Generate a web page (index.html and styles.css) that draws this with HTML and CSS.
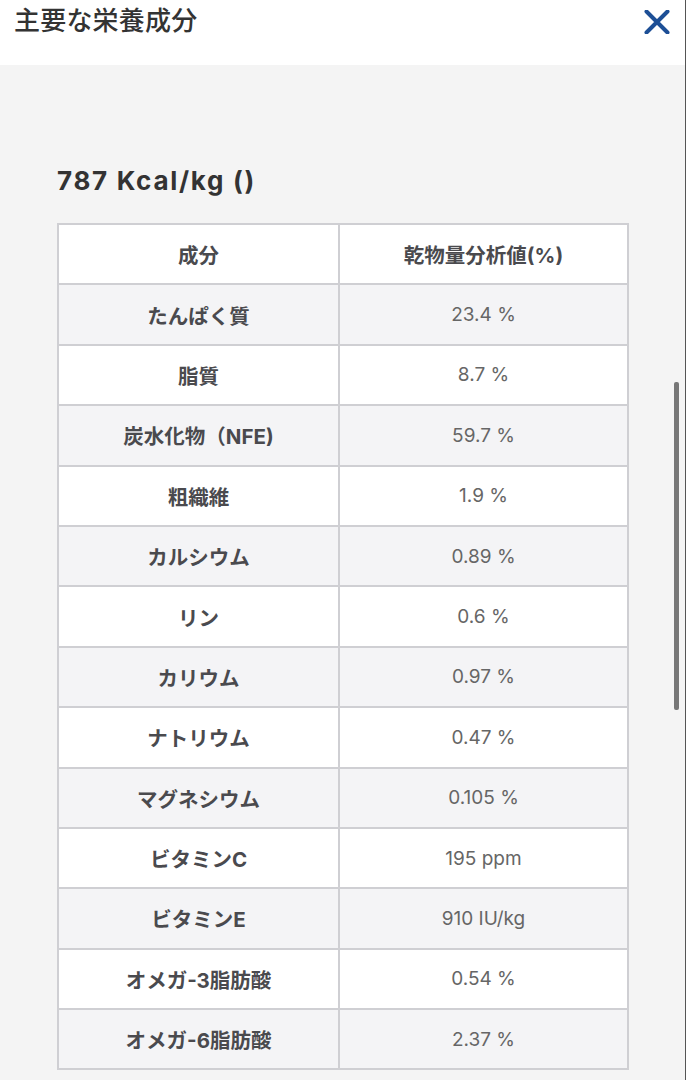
FILE: index.html
```html
<!DOCTYPE html>
<html lang="ja">
<head>
<meta charset="utf-8">
<title>主要な栄養成分</title>
<link rel="stylesheet" href="styles.css">
</head>
<body>
<div class="page">
  <header class="top">
    <h1 class="title">主要な栄養成分</h1>
    <button class="close" aria-label="閉じる">
      <svg width="26" height="24" viewBox="0 0 26 24"><path d="M2.5 1.5 L23.5 22.5 M23.5 1.5 L2.5 22.5" stroke="#1d4f96" stroke-width="4" stroke-linecap="round" fill="none"/></svg>
    </button>
  </header>
  <main class="content">
    <h2 class="kcal">787 Kcal/kg ()</h2>
    <table class="nutri">
      <colgroup><col class="c1"><col class="c2"></colgroup>
      <thead>
        <tr><th>成分</th><th>乾物量分析値(%)</th></tr>
      </thead>
      <tbody>
        <tr><th>たんぱく質</th><td>23.4 %</td></tr>
        <tr><th>脂質</th><td>8.7 %</td></tr>
        <tr><th>炭水化物（NFE)</th><td>59.7 %</td></tr>
        <tr><th>粗織維</th><td>1.9 %</td></tr>
        <tr><th>カルシウム</th><td>0.89 %</td></tr>
        <tr><th>リン</th><td>0.6 %</td></tr>
        <tr><th>カリウム</th><td>0.97 %</td></tr>
        <tr><th>ナトリウム</th><td>0.47 %</td></tr>
        <tr><th>マグネシウム</th><td>0.105 %</td></tr>
        <tr><th>ビタミンC</th><td>195 ppm</td></tr>
        <tr><th>ビタミンE</th><td>910 IU/kg</td></tr>
        <tr><th>オメガ-3脂肪酸</th><td>0.54 %</td></tr>
        <tr><th>オメガ-6脂肪酸</th><td>2.37 %</td></tr>
      </tbody>
    </table>
  </main>
  <div class="thumb"></div>
</div>
</body>
</html>
```
FILE: styles.css
```css
* { box-sizing: border-box; }
html, body { margin: 0; padding: 0; }
body {
  font-family: Inter, "Noto Sans CJK JP", sans-serif;
  color: #333;
  background: #f4f4f4;
  overflow: hidden;
}
.page {
  position: relative;
  width: 686px;
  height: 1080px;
  border-right: 1px solid #555;
  overflow: hidden;
  background: #f4f4f4;
}
.top {
  height: 65px;
  background: #fff;
  display: flex;
  justify-content: space-between;
  align-items: flex-start;
  padding: 2px 15px 0 14px;
}
.title {
  margin: 0;
  font-family: "Noto Sans CJK JP", sans-serif;
  font-size: 26px;
  font-weight: 500;
  line-height: 34px;
  color: #333;
  letter-spacing: 0.2px;
}
.close {
  border: 0;
  background: none;
  padding: 0;
  margin-top: 8px;
  width: 26px;
  height: 24px;
  display: block;
}
.close svg { display: block; }
.content {
  padding: 98px 57px 0 57px;
}
.kcal {
  margin: 0 0 24px;
  font-size: 26px;
  font-weight: 700;
  line-height: 36px;
  color: #333;
  letter-spacing: 1.7px;
}
.nutri {
  width: 570px;
  table-layout: fixed;
  border-collapse: collapse;
  border: 2px solid #cfcfd3;
}
.c1 { width: 281px; }
.c2 { width: 289px; }
.nutri th, .nutri td {
  border: 2px solid #cfcfd3;
  height: 60.4px;
  padding: 0 8px;
  text-align: center;
  vertical-align: middle;
}
.nutri th {
  font-size: 20.5px;
  font-weight: 700;
  color: #4a4a4e;
}
.nutri td {
  font-size: 19px;
  font-weight: 400;
  color: #666;
}
.nutri thead th { background: #fff; }
.nutri tbody tr:nth-child(odd) { background: #f4f4f6; }
.nutri tbody tr:nth-child(even) { background: #fff; }
.thumb {
  position: absolute;
  left: 674px;
  top: 382px;
  width: 5px;
  height: 328px;
  background: #777;
  border-radius: 2px;
}
```
